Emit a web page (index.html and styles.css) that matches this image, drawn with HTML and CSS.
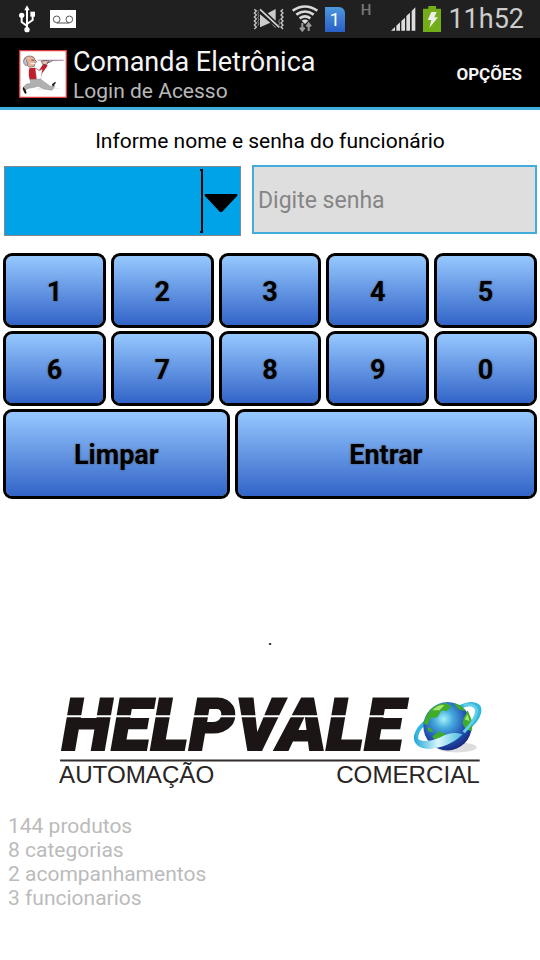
FILE: index.html
```
<!DOCTYPE html>
<html lang="pt-BR">
<head>
<meta charset="utf-8">
<meta name="viewport" content="width=device-width, initial-scale=1">
<title>Comanda Eletrônica</title>
<link rel="stylesheet" href="styles.css">
</head>
<body>
<div class="status">
  <svg class="usb" width="18" height="28" viewBox="55 17 54 84" fill="#fff" stroke="#fff" aria-hidden="true">
    <path d="M82 30V92M82 80L66 68V52M82 74L99 62V46" fill="none" stroke-width="6"/>
    <path d="M82 18l8 15H74z" stroke="none"/><circle cx="82" cy="91" r="8" stroke="none"/><circle cx="66" cy="48" r="8" stroke="none"/><path d="M92 37h14v15H92z" stroke="none"/>
  </svg>
  <svg width="26" height="18" viewBox="0 0 78 54" aria-hidden="true">
    <path fill="#fff" d="M0 0h78v54H0z"/><g fill="none" stroke="#555" stroke-width="3"><circle cx="20" cy="28" r="10"/><circle cx="58" cy="28" r="10"/><path d="M20 39h38"/></g>
  </svg>
  <div class="tray">
    <svg width="32" height="22" viewBox="36 26 96 66" aria-hidden="true">
      <g fill="none" stroke="#c8c8c8" stroke-width="4"><path d="M40 30l6 5-6 6 6 6-6 6 6 6-6 6 6 6-6 6 6 6-6 6"/><path d="M50 32l4 5-4 6 4 6-4 6 4 6-4 6 4 6-4 6" stroke-width="2"/><path d="M126 30l-6 5 6 6-6 6 6 6-6 6 6 6-6 6 6 6-6 6 6 6"/><path d="M116 60l-3 6 3 6-3 6 3 6" stroke-width="2"/></g>
      <path d="M57 45l31 25-31 14zM80 42l24-13v35zM88 70l16 12v4z" fill="#ccc"/><path d="M55 31l60 55" stroke="#202020" stroke-width="10"/><path d="M57 30l58 54" stroke="#d5d5d5" stroke-width="5"/>
    </svg>
    <svg width="26" height="28" viewBox="151 13 78 84" aria-hidden="true">
      <g fill="none" stroke="#d8d8d8" stroke-width="8"><path d="M153 30q37-25 74 0"/><path d="M164 42q26-19 52 0"/><path d="M174 53q16-12 32 0"/></g><path d="M180 60q10-7 20 0l-10 10z" fill="#ddd"/>
      <path d="M182 67v23m-7-9l7 9 7-9M201 91V68m-7 9l7-9 7 9" fill="none" stroke="#999" stroke-width="6"/>
    </svg>
    <div class="sim">1</div>
    <span class="net">H</span>
    <svg class="signal" width="25" height="24" viewBox="0 0 75 72" fill="#ddd" aria-hidden="true"><path d="M0 71l12-11v11zM16 56l11-10v25H16zM31 42l11-10v39H31zM46 27l11-10v54H46zM62 12L73 1v70H62z"/></svg>
    <svg width="18" height="26" viewBox="0 0 54 78" aria-hidden="true"><path d="M16 0h23v8h15v70H0V8h16z" fill="#73ad17"/><path d="M25 18h16l-7 16h11L19 66l6-24H14z" fill="#eee"/></svg>
    <time class="clock">11h52</time>
  </div>
</div>
<header class="bar">
  <svg class="avatar" width="48" height="48" viewBox="27 18 144 144" aria-hidden="true">
    <path d="M27 18h144v144H27z" fill="#e23b3f"/><path d="M31 22h136v136H31z" fill="#fff"/>
    <path d="M74 135q45-12 80-1l-60 5z" fill="#eee"/>
    <path d="M81 47h80v3l-55 2-25-3z" fill="#a98bad"/>
    <path d="M42 48q1-12 19-12 13 1 14 12l5 5-5 2-2 12-14 3-10-8z" fill="#e9b29c" stroke="#555" stroke-width="2"/>
    <path d="M41 48q5-8 9 0l3 14-6 3-6-8z" fill="#b9c4c9" stroke="#667" stroke-width="2"/><path d="M62 58l13 1" stroke="#eee" stroke-width="4"/><path d="M64 48l9 1" stroke="#222" stroke-width="2"/>
    <path d="M58 73l17-2 13 7 14-22 11 9-16 22-8 20-29 2q-6-15-2-36z" fill="#c01e2a"/>
    <path d="M76 73l12 7 9-4-5 32-12-1z" fill="#fff" stroke="#999" stroke-width="1"/>
    <path d="M94 52l14-3 9 3-7 10-12-1zM110 57l14-4 4-5" fill="#eac0ad" stroke="#444" stroke-width="2"/>
    <path d="M60 106l31-1 32 23 7-8 5 6-9 13q-26-2-41-12L68 131q-16 1-23 8l-5-6q5-16 22-14z" fill="#b0b0b0" stroke="#777" stroke-width="1"/>
    <path d="M40 128l7 10 3 9q-5 5-8-3l-4-10zM126 121l10-8q4 3-2 8l-5 7z" fill="#161616"/>
  </svg>
  <div class="titles"><h1>Comanda Eletrônica</h1><p>Login de Acesso</p></div>
  <button class="options" type="button">OPÇÕES</button>
</header>
<main>
  <form>
    <p class="prompt">Informe nome e senha do funcionário</p>
    <div class="fields">
      <div class="picker">
        <select aria-label="Funcionário"><option></option></select>
        <svg class="arrow" width="39" height="64" viewBox="0 0 39 64" aria-hidden="true"><path d="M0 0h3v2H0zM1 0h2v64H1zM0 62h3v2H0z"/><path d="M5 25h32q1 1 0 2L22 43h-2L5 27q-1-1 0-2z"/></svg>
      </div>
      <input class="password" type="password" aria-label="Senha" placeholder="Digite senha">
    </div>
    <div class="keys">
      <button type="button">1</button><button type="button">2</button><button type="button">3</button><button type="button">4</button><button type="button">5</button>
      <button type="button">6</button><button type="button">7</button><button type="button">8</button><button type="button">9</button><button type="button">0</button>
    </div>
    <div class="actions"><button type="reset">Limpar</button><button type="button">Entrar</button></div>
  </form>
  <p class="dot">.</p>
  <svg class="logo" viewBox="0 0 440 110" role="img" aria-label="Helpvale Automação Comercial">
    <defs>
      <radialGradient id="sea" cx=".42" cy=".35" r=".65"><stop offset="0" stop-color="#a6f3fa"/><stop offset=".3" stop-color="#45aadd"/><stop offset=".7" stop-color="#2354b4"/><stop offset="1" stop-color="#172c83"/></radialGradient>
      <linearGradient id="ring"><stop offset="0" stop-color="#22a7d4"/><stop offset=".5" stop-color="#d9f6ff"/><stop offset="1" stop-color="#48bce0"/></linearGradient>
    </defs>
    <text class="brand" x="13" y="65">HELPVALE</text>
    <path d="M15 31h344" stroke="#fff" stroke-width="2"/>
    <path d="M11 75h417" stroke="#332d2d" stroke-width="2"/>
    <text class="tagline" x="10" y="97">AUTOMAÇÃO</text><text class="tagline" x="428" y="97" text-anchor="end">COMERCIAL</text>
    <ellipse cx="405" cy="62" rx="20" ry="5" fill="#ddd"/>
    <path d="M406 23C427 13 433 23 423 36 411 50 390 63 374 61 359 58 364 44 377 35" fill="none" stroke="#35b7de" stroke-width="4"/>
    <circle cx="396" cy="41" r="24" fill="url(#sea)"/>
    <path d="M375 31q6-12 19-13l6 3-5 5-5-1-4 7-7 1-3 7-4-2zM402 18q9 2 12 8l-7-2zM381 51l7-5 6 3-2 6-7 4zM412 33l4-8 5 12-1 9-6-2-3-6zM376 42l4 1 2 4-5-1z" fill="#3fac2a"/>
    <path d="M381 25q6-6 12-5l-5 5zM413 34l3-5 2 7z" fill="#a6e570"/>
    <path d="M367 43C359 56 374 59 389 52 398 47 404 47 411 49 394 66 370 66 364 57 361 51 364 47 367 43z" fill="url(#ring)"/>
    <path d="M412 20q16-2 12 10-3 8-12 17" fill="none" stroke="#62cee8" stroke-width="3"/>
  </svg>
  <ul class="stats"><li>144 produtos</li><li>8 categorias</li><li>2 acompanhamentos</li><li>3 funcionarios</li></ul>
</main>
</body>
</html>
```
FILE: styles.css
```
* { box-sizing: border-box; }
body { margin: 0; background: #fff; color: #000; font-family: Roboto, "Liberation Sans", sans-serif; }
h1, p, ul { margin: 0; padding: 0; }
button, input, select { font-family: inherit; }

.status { display: flex; align-items: center; gap: 14px; height: 38px; padding: 0 16px 0 18px; background: #202020; }
.tray { display: flex; align-items: center; gap: 7px; margin-left: auto; }
.sim { width: 20px; height: 25px; background: linear-gradient(#4d98dc, #2860c8); border-top-right-radius: 6px; color: #fff; font-size: 18px; line-height: 26px; text-align: center; }
.net { align-self: flex-start; margin-left: 9px; color: #777; font-size: 15px; font-weight: 500; line-height: 20px; }
.signal { margin-left: 13px; }
.clock { color: #ccc; font-size: 27px; line-height: 38px; }

.bar { display: flex; align-items: center; gap: 6px; min-height: 72px; padding: 3px 18px 0 19px; background: #000; border-bottom: 3px solid #3fb0dc; }
.titles { flex: 1; padding-top: 2px; }
.titles h1 { color: #f5f5f5; font-size: 27px; font-weight: 400; line-height: 32px; }
.titles p { color: #b8b8b8; font-size: 21px; line-height: 26px; }
.options { padding: 0; border: 0; background: none; color: #f5f5f5; font-size: 17px; font-weight: 700; }

.prompt { padding: 19px 0 11px; font-size: 21px; line-height: 25px; text-align: center; }
.fields { display: grid; grid-template-columns: 237fr 285fr; gap: 11px; padding: 0 3px 0 4px; }
.picker { position: relative; margin-top: 1px; }
.picker select { display: block; width: 100%; height: 70px; border: 1px solid #85878a; border-radius: 0; background: #00a2e8; appearance: none; }
.arrow { position: absolute; top: 3px; right: 2px; pointer-events: none; }
.password { width: 100%; height: 69px; padding: 2px 4px 0; border: 2px solid #42addc; border-radius: 0; background: #dedede; font-size: 23px; }
.password::placeholder { color: #858585; }

.keys { display: grid; grid-template-columns: repeat(5, 1fr); grid-auto-rows: 75px; gap: 3px 5px; padding: 17px 3px 3px; }
.actions { display: grid; grid-template-columns: 3fr 4fr; grid-auto-rows: 90px; gap: 5px; padding: 0 3px; }
.keys button, .actions button { padding: 2px 0 0; border: 3px solid #000; border-radius: 9px; background: linear-gradient(#96c8ff, #3264c8) padding-box; color: #000; font-size: 27px; font-weight: 700; text-shadow: 0 0 2px #555; }

.dot { padding-top: 128px; font-size: 18px; line-height: 24px; text-align: center; }
.logo { display: block; width: 82%; margin: 34px auto 0; overflow: visible; }
.brand { font: italic 900 72px Roboto, sans-serif; fill: #1b1515; stroke: #1b1515; stroke-width: 2px; }
.tagline { font: 24px "Liberation Sans", sans-serif; fill: #292525; }
.stats { padding: 18px 8px; color: #bbb; font-size: 21px; line-height: 24px; list-style: none; }
```
